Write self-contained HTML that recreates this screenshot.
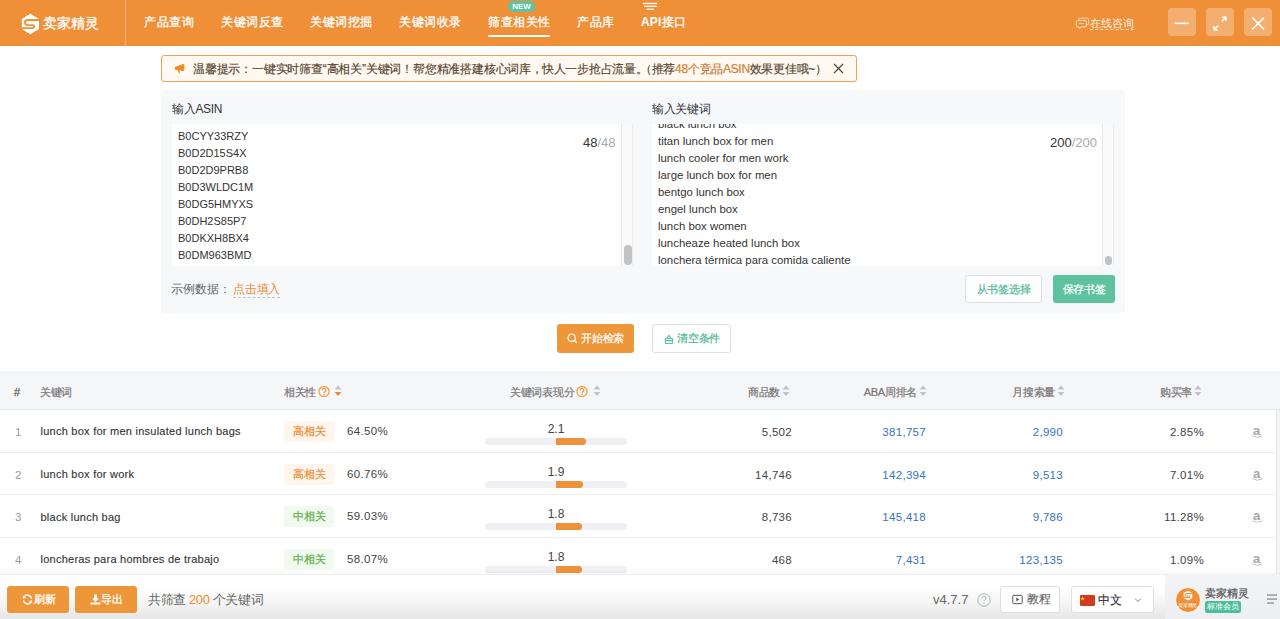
<!DOCTYPE html>
<html><head><meta charset="utf-8">
<style>
*{box-sizing:border-box;margin:0;padding:0}
html,body{width:1280px;height:619px;overflow:hidden;background:#fff;font-family:"Liberation Sans",sans-serif;color:#333}
.a{position:absolute;white-space:nowrap}
#hdr{position:absolute;left:0;top:0;width:1280px;height:46px;background:#EF9039}
.nav{position:absolute;top:15px;font-size:12px;line-height:15px;color:#fff;font-weight:400;-webkit-text-stroke:0.3px #fff;letter-spacing:0.6px;white-space:nowrap}
.winbtn{position:absolute;top:8px;width:28px;height:28px;border-radius:4px;background:rgba(255,255,255,.28)}
.winbtn svg{position:absolute;left:0;top:0}
#notice{position:absolute;left:161px;top:55px;width:696px;height:27px;border:1px solid #F2A15A;border-radius:3px;background:#FFF9F2}
#panel{position:absolute;left:161px;top:90px;width:964px;height:223px;background:#F7F8FA;border-radius:4px}
.lbl{position:absolute;font-size:12px;color:#333;line-height:14px;white-space:nowrap;letter-spacing:-0.3px}
.ta{position:absolute;top:124px;height:142px;background:#fff;overflow:hidden}
.ln{position:absolute;font-size:11px;line-height:17px;color:#333;white-space:nowrap}
.cnt{position:absolute;font-size:13px;line-height:15px;color:#333;white-space:nowrap}
.cnt span{color:#aaa}
.sb{position:absolute;top:124px;height:142px;background:#FAFAFA;border-left:1px solid #E8E8E8;border-right:1px solid #EDEDED}
.thumb{position:absolute;background:#C2C2C2;border-radius:4px}
.btn{position:absolute;border-radius:3px;white-space:nowrap}
#thead{position:absolute;left:0;top:371px;width:1280px;height:39px;background:#F5F6F8;border-bottom:1px solid #E6E8EB}
.th{position:absolute;top:385px;font-size:11px;color:#757575;white-space:nowrap;line-height:14px;letter-spacing:-0.3px;-webkit-text-stroke:0.2px #757575}
.row{position:absolute;left:0;width:1276px;border-bottom:1px solid #EBECEE}
.td{position:absolute;font-size:12px;color:#444;white-space:nowrap;line-height:14px}
.kw{font-size:11px;letter-spacing:0.25px;-webkit-text-stroke:0.12px #333;color:#333}
.num{text-align:right;font-size:11.5px;letter-spacing:0.3px}
.pct{font-size:11.5px;letter-spacing:0.35px}
.blue{color:#3572C2}
.tag{position:absolute;left:284px;width:50px;height:21px;border-radius:3px;font-size:11px;line-height:21px;text-align:center;-webkit-text-stroke:0.2px currentColor}
.hi{background:#FEF5EC;color:#EF8A2E}
.mid{background:#F0FAEE;color:#5BAF45}
.track{position:absolute;left:485px;width:142px;height:7px;border-radius:4px;background:#EEF0F4}
.fill{position:absolute;left:71px;top:0;height:7px;border-radius:0 4px 4px 0;background:#EE9138}
#footer{position:absolute;left:0;top:574px;width:1280px;height:45px;background:linear-gradient(#fff 0%,#fff 30%,#F5F5F5 62%,#E6E6E6 100%);border-top:1px solid #EFEFEF;box-shadow:0 -2px 3px rgba(0,0,0,0.03)}
</style></head><body>
<div id="hdr">
  <div class="a" style="left:125px;top:0;width:1px;height:46px;background:rgba(255,255,255,.35)"></div>
  <svg class="a" style="left:16px;top:8px" width="30" height="30" viewBox="16 8 30 30">
    <polygon points="30.3,13.8 39,18.9 39,29 30.3,34.2 21.8,29 21.8,18.9" fill="#fff"/>
    <path d="M40,20 H27.5 A2.55,2.55 0 0 0 27.5,25.1 H33 A1.5,1.5 0 0 1 33,28.1 H20" fill="none" stroke="#EF9039" stroke-width="1.8"/>
  </svg>
  <div class="nav" style="left:43px;top:16px;font-size:14px;letter-spacing:-0.1px">卖家精灵</div>
  <div class="nav" style="left:144px">产品查询</div>
  <div class="nav" style="left:221px">关键词反查</div>
  <div class="nav" style="left:310px">关键词挖掘</div>
  <div class="nav" style="left:399px">关键词收录</div>
  <div class="nav" style="left:488px">筛查相关性</div>
  <div class="a" style="left:488px;top:35px;width:62px;height:2px;background:#fff;border-radius:1px"></div>
  <div class="a" style="left:508px;top:1px;width:27px;height:10.5px;border-radius:5px;background:#5DC3A0;color:#fff;font-size:8px;line-height:12px;font-weight:700;text-align:center">NEW</div>
  <div class="nav" style="left:577px">产品库</div>
  <svg class="a" style="left:642px;top:0" width="16" height="11" viewBox="0 0 16 11"><rect x="1" y="2.8" width="14.2" height="1.3" fill="#fff"/><rect x="2" y="5.7" width="13" height="1.3" fill="#fff"/><rect x="4.6" y="8.6" width="7.2" height="1.3" fill="#fff"/></svg>
  <div class="nav" style="left:641px"><span style="font-weight:700;-webkit-text-stroke:0;letter-spacing:0.2px">API</span>接口</div>
  <svg class="a" style="left:1072px;top:12px" width="20" height="20" viewBox="0 0 20 20"><path d="M6.8,8.3 V7.2 Q6.8,6.2 7.8,6.2 H15.6 Q16.6,6.2 16.6,7.2 V11.6 Q16.6,12.6 15.6,12.6 H14.6" fill="none" stroke="rgba(255,255,255,.7)" stroke-width="0.9"/><path d="M5.4,8.6 H13.3 Q14.4,8.6 14.4,9.7 V13.8 Q14.4,14.9 13.3,14.9 H9.2 L7.6,16.6 L7.1,14.9 H5.4 Q4.3,14.9 4.3,13.8 V9.7 Q4.3,8.6 5.4,8.6 Z" fill="none" stroke="rgba(255,255,255,.8)" stroke-width="0.9"/><path d="M6.6,11.6 H12.2" stroke="rgba(255,255,255,.6)" stroke-width="0.8"/></svg>
  <div class="nav" style="left:1090px;top:16px;font-size:11px;letter-spacing:0;-webkit-text-stroke:0;color:rgba(255,255,255,.88);border-bottom:1px dashed rgba(255,255,255,.8);line-height:12px;padding-bottom:0;top:17px">在线咨询</div>
  <div class="winbtn" style="left:1168px"><svg width="28" height="28"><rect x="6.6" y="14.6" width="14" height="1.5" fill="#fff"/></svg></div>
  <div class="winbtn" style="left:1206px"><svg width="28" height="28"><path d="M16.4,9.2 H20 V12.8 M20,9.2 L15.8,13.4 M8,18.2 V21.8 H11.6 M8,21.8 L12.2,17.6" fill="none" stroke="#fff" stroke-width="1.5"/></svg></div>
  <div class="winbtn" style="left:1244px"><svg width="28" height="28"><path d="M8.3,9.6 L20,21.3 M20,9.6 L8.3,21.3" stroke="#fff" stroke-width="1.5"/></svg></div>
</div>
<div id="notice"></div>
<svg class="a" style="left:174px;top:63px" width="12" height="11" viewBox="0 0 12 11"><path d="M0.8,3.9 L9,1.1 Q10.5,0.7 10.5,4.5 Q10.5,8.3 9,7.9 L0.8,6.7 Z" fill="#EE8B35"/><path d="M4.3,7.3 L5.5,9.6" stroke="#EE8B35" stroke-width="1.4" stroke-linecap="round"/></svg>
<div class="a" style="left:193px;top:61.5px;font-size:12px;line-height:14px;color:#55432E;letter-spacing:-0.2px;-webkit-text-stroke:0.15px #55432E">温馨提示：一键实时筛查“高相关”关键词！帮您精准搭建核心词库，</div>
<div class="a" style="left:542px;top:61.5px;font-size:12px;line-height:14px;color:#55432E;letter-spacing:-0.3px;-webkit-text-stroke:0.15px #55432E">快人一步抢占流量。</div>
<div class="a" style="left:640px;top:61.5px;font-size:12px;line-height:14px;color:#55432E;letter-spacing:-0.3px;-webkit-text-stroke:0.15px #55432E">（推荐<span style="color:#EF8A2E">48个竞品ASIN</span>效果更佳哦~）</div>
<svg class="a" style="left:833px;top:63px" width="11" height="11" viewBox="0 0 11 11"><path d="M1,1 L10,10 M10,1 L1,10" stroke="#5a4a3a" stroke-width="1.3"/></svg>
<div id="panel"></div>
<div class="lbl" style="left:172px;top:102px">输入ASIN</div>
<div class="lbl" style="left:652px;top:102px">输入关键词</div>
<div class="ta" style="left:172px;width:461px">
  <div class="ln" style="left:6px;top:4px">B0CYY33RZY</div>
  <div class="ln" style="left:6px;top:21px">B0D2D15S4X</div>
  <div class="ln" style="left:6px;top:38px">B0D2D9PRB8</div>
  <div class="ln" style="left:6px;top:55px">B0D3WLDC1M</div>
  <div class="ln" style="left:6px;top:72px">B0DG5HMYXS</div>
  <div class="ln" style="left:6px;top:89px">B0DH2S85P7</div>
  <div class="ln" style="left:6px;top:106px">B0DKXH8BX4</div>
  <div class="ln" style="left:6px;top:123px">B0DM963BMD</div>
</div>
<div class="sb" style="left:621px;width:12px"></div>
<div class="thumb" style="left:624px;top:245px;width:8px;height:20px"></div>
<div class="cnt" style="left:583px;top:135px">48<span>/48</span></div>
<div class="ta" style="left:652px;width:462px">
  <div class="ln" style="left:6px;top:-8px;font-size:11.4px">black lunch box</div>
  <div class="ln" style="left:6px;top:9px;font-size:11.4px">titan lunch box for men</div>
  <div class="ln" style="left:6px;top:26px;font-size:11.4px">lunch cooler for men work</div>
  <div class="ln" style="left:6px;top:43px;font-size:11.4px">large lunch box for men</div>
  <div class="ln" style="left:6px;top:60px;font-size:11.4px">bentgo lunch box</div>
  <div class="ln" style="left:6px;top:77px;font-size:11.4px">engel lunch box</div>
  <div class="ln" style="left:6px;top:94px;font-size:11.4px">lunch box women</div>
  <div class="ln" style="left:6px;top:111px;font-size:11.4px">luncheaze heated lunch box</div>
  <div class="ln" style="left:6px;top:128px;font-size:11.4px">lonchera térmica para comida caliente</div>
</div>
<div class="sb" style="left:1102px;width:12px"></div>
<div class="thumb" style="left:1105px;top:256px;width:7px;height:9px"></div>
<div class="cnt" style="left:1050px;top:135px">200<span>/200</span></div>
<div class="a" style="left:171px;top:282px;font-size:12px;line-height:14px;color:#666">示例数据：</div>
<div class="a" style="left:233px;top:282px;font-size:12px;line-height:14px;color:#EF8A2E;border-bottom:1px dashed #BFC3C8;padding-bottom:1px;letter-spacing:-0.2px">点击填入</div>
<div class="btn" style="left:965px;top:275px;width:77px;height:28px;background:#fff;border:1px solid #DCDFE6;color:#4DB993;font-size:11px;line-height:26px;text-align:center;letter-spacing:-0.3px;-webkit-text-stroke:0.2px #4DB993">从书签选择</div>
<div class="btn" style="left:1053px;top:275px;width:62px;height:28px;background:#5EC29F;color:#fff;font-size:11px;line-height:28px;text-align:center;letter-spacing:-0.3px;-webkit-text-stroke:0.2px #fff">保存书签</div>
<div class="btn" style="left:557px;top:324px;width:77px;height:29px;background:#EE963A;color:#fff;font-size:11px;line-height:29px">
  <svg class="a" style="left:10px;top:9px" width="11" height="11" viewBox="0 0 11 11"><circle cx="4.7" cy="4.7" r="3.7" fill="none" stroke="#fff" stroke-width="1.2"/><path d="M7.3,7.3 L9.8,9.8" stroke="#fff" stroke-width="1.3"/></svg>
  <span class="a" style="left:24px;top:0;letter-spacing:-0.2px;-webkit-text-stroke:0.2px #fff">开始检索</span></div>
<div class="btn" style="left:652px;top:324px;width:79px;height:29px;background:#fff;border:1px solid #DCDFE6;color:#4DB993;font-size:11px;line-height:27px">
  <svg class="a" style="left:11px;top:8.5px" width="10" height="11" viewBox="0 0 10 11"><path d="M1.4,4.5 H8.4 V9.5 H1.4 Z M1.4,6.6 H8.4 M2.8,4.5 L4.9,1.2 L7,4.5" fill="none" stroke="#5CC3A2" stroke-width="1.1" stroke-linejoin="round"/></svg>
  <span class="a" style="left:24px;top:0;letter-spacing:-0.2px;-webkit-text-stroke:0.2px #4DB993">清空条件</span></div>
<div id="thead"></div>
<div class="th" style="left:14px;-webkit-text-stroke:0.3px #666">#</div>
<div class="th" style="left:40px">关键词</div>
<div class="th" style="left:284px">相关性</div>
<svg class="a" style="left:318px;top:386px" width="12" height="12" viewBox="0 0 12 12"><circle cx="6" cy="5.6" r="5.1" fill="none" stroke="#EF9A3C" stroke-width="1.15"/><path d="M4.2,4.3 A1.8,1.8 0 1 1 6.7,5.9 Q6,6.3 6,7.2" fill="none" stroke="#EF9A3C" stroke-width="1.25"/><circle cx="6" cy="8.7" r="0.7" fill="#EF9A3C"/></svg>
<svg class="a" style="left:334px;top:385px" width="8" height="12" viewBox="0 0 8 12"><path d="M4,0.5 L7.5,4.5 H0.5 Z" fill="#C0C4CC"/><path d="M0.5,7 H7.5 L4,11 Z" fill="#EF8A2E"/></svg>
<div class="th" style="left:510px">关键词表现分</div>
<svg class="a" style="left:576px;top:386px" width="12" height="12" viewBox="0 0 12 12"><circle cx="6" cy="5.6" r="5.1" fill="none" stroke="#EF9A3C" stroke-width="1.15"/><path d="M4.2,4.3 A1.8,1.8 0 1 1 6.7,5.9 Q6,6.3 6,7.2" fill="none" stroke="#EF9A3C" stroke-width="1.25"/><circle cx="6" cy="8.7" r="0.7" fill="#EF9A3C"/></svg>
<svg class="a" style="left:593px;top:385px" width="8" height="12" viewBox="0 0 8 12"><path d="M4,0.5 L7.5,4.5 H0.5 Z" fill="#C0C4CC"/><path d="M0.5,7 H7.5 L4,11 Z" fill="#C0C4CC"/></svg>
<div class="th" style="right:500px">商品数</div>
<svg class="a" style="left:782px;top:385px" width="8" height="12" viewBox="0 0 8 12"><path d="M4,0.5 L7.5,4.5 H0.5 Z" fill="#C0C4CC"/><path d="M0.5,7 H7.5 L4,11 Z" fill="#C0C4CC"/></svg>
<div class="th" style="right:363px">ABA周排名</div>
<svg class="a" style="left:919px;top:385px" width="8" height="12" viewBox="0 0 8 12"><path d="M4,0.5 L7.5,4.5 H0.5 Z" fill="#C0C4CC"/><path d="M0.5,7 H7.5 L4,11 Z" fill="#C0C4CC"/></svg>
<div class="th" style="right:225px">月搜索量</div>
<svg class="a" style="left:1057px;top:385px" width="8" height="12" viewBox="0 0 8 12"><path d="M4,0.5 L7.5,4.5 H0.5 Z" fill="#C0C4CC"/><path d="M0.5,7 H7.5 L4,11 Z" fill="#C0C4CC"/></svg>
<div class="th" style="right:88px">购买率</div>
<svg class="a" style="left:1194px;top:385px" width="8" height="12" viewBox="0 0 8 12"><path d="M4,0.5 L7.5,4.5 H0.5 Z" fill="#C0C4CC"/><path d="M0.5,7 H7.5 L4,11 Z" fill="#C0C4CC"/></svg>
<div class="row" style="top:410px;height:42.5px"></div>
<div class="td" style="left:15px;top:425px;color:#999;font-size:11.5px">1</div>
<div class="td kw" style="left:40.5px;top:423.5px">lunch box for men insulated lunch bags</div>
<div class="tag hi" style="top:421px">高相关</div>
<div class="td pct" style="left:347px;top:424px">64.50%</div>
<div class="td" style="left:506px;width:100px;text-align:center;top:422px">2.1</div>
<div class="track" style="top:438px"><div class="fill" style="width:29.8px"></div></div>
<div class="td num" style="right:488px;top:425px">5,502</div>
<div class="td num blue" style="right:354px;top:425px">381,757</div>
<div class="td num blue" style="right:217px;top:425px">2,990</div>
<div class="td num" style="right:76px;top:425px">2.85%</div>
<div class="td" style="left:1253px;top:424px;color:#A3A7AE;font-size:13px;font-weight:700;line-height:14px">a</div><svg class="a" style="left:1252px;top:435px" width="11" height="4" viewBox="0 0 11 4"><path d="M0.5,0.8 Q5.5,3.6 10.5,0.8" fill="none" stroke="#B5B8BE" stroke-width="0.9"/></svg>
<div class="row" style="top:452.5px;height:42.5px"></div>
<div class="td" style="left:15px;top:467.5px;color:#999;font-size:11.5px">2</div>
<div class="td kw" style="left:40.5px;top:467px">lunch box for work</div>
<div class="tag hi" style="top:463.5px">高相关</div>
<div class="td pct" style="left:347px;top:466.5px">60.76%</div>
<div class="td" style="left:506px;width:100px;text-align:center;top:464.5px">1.9</div>
<div class="track" style="top:480.5px"><div class="fill" style="width:27.0px"></div></div>
<div class="td num" style="right:488px;top:467.5px">14,746</div>
<div class="td num blue" style="right:354px;top:467.5px">142,394</div>
<div class="td num blue" style="right:217px;top:467.5px">9,513</div>
<div class="td num" style="right:76px;top:467.5px">7.01%</div>
<div class="td" style="left:1253px;top:466.5px;color:#A3A7AE;font-size:13px;font-weight:700;line-height:14px">a</div><svg class="a" style="left:1252px;top:477.5px" width="11" height="4" viewBox="0 0 11 4"><path d="M0.5,0.8 Q5.5,3.6 10.5,0.8" fill="none" stroke="#B5B8BE" stroke-width="0.9"/></svg>
<div class="row" style="top:495px;height:42.5px"></div>
<div class="td" style="left:15px;top:510px;color:#999;font-size:11.5px">3</div>
<div class="td kw" style="left:40.5px;top:509.5px">black lunch bag</div>
<div class="tag mid" style="top:506px">中相关</div>
<div class="td pct" style="left:347px;top:509px">59.03%</div>
<div class="td" style="left:506px;width:100px;text-align:center;top:507px">1.8</div>
<div class="track" style="top:523px"><div class="fill" style="width:25.6px"></div></div>
<div class="td num" style="right:488px;top:510px">8,736</div>
<div class="td num blue" style="right:354px;top:510px">145,418</div>
<div class="td num blue" style="right:217px;top:510px">9,786</div>
<div class="td num" style="right:76px;top:510px">11.28%</div>
<div class="td" style="left:1253px;top:509px;color:#A3A7AE;font-size:13px;font-weight:700;line-height:14px">a</div><svg class="a" style="left:1252px;top:520px" width="11" height="4" viewBox="0 0 11 4"><path d="M0.5,0.8 Q5.5,3.6 10.5,0.8" fill="none" stroke="#B5B8BE" stroke-width="0.9"/></svg>
<div class="row" style="top:537.5px;height:42.5px"></div>
<div class="td" style="left:15px;top:552.5px;color:#999;font-size:11.5px">4</div>
<div class="td kw" style="left:40.5px;top:552px">loncheras para hombres de trabajo</div>
<div class="tag mid" style="top:548.5px">中相关</div>
<div class="td pct" style="left:347px;top:551.5px">58.07%</div>
<div class="td" style="left:506px;width:100px;text-align:center;top:549.5px">1.8</div>
<div class="track" style="top:565.5px"><div class="fill" style="width:25.6px"></div></div>
<div class="td num" style="right:488px;top:552.5px">468</div>
<div class="td num blue" style="right:354px;top:552.5px">7,431</div>
<div class="td num blue" style="right:217px;top:552.5px">123,135</div>
<div class="td num" style="right:76px;top:552.5px">1.09%</div>
<div class="td" style="left:1253px;top:551.5px;color:#A3A7AE;font-size:13px;font-weight:700;line-height:14px">a</div><svg class="a" style="left:1252px;top:562.5px" width="11" height="4" viewBox="0 0 11 4"><path d="M0.5,0.8 Q5.5,3.6 10.5,0.8" fill="none" stroke="#B5B8BE" stroke-width="0.9"/></svg>
<div class="a" style="left:1276px;top:410px;width:1px;height:165px;background:#E8E9EB"></div><div class="a" style="left:1277px;top:410px;width:3px;height:165px;background:#F3F3F3"></div>
<div id="footer">
  <div class="btn" style="left:7px;top:11px;width:62px;height:27px;background:#EE963A;color:#fff;font-size:12px;line-height:27px">
    <svg class="a" style="left:15px;top:8px" width="11" height="11" viewBox="0 0 11 11"><path d="M9.6,4.6 A4.2,4.2 0 0 0 2.2,2.6 M1.4,6.4 A4.2,4.2 0 0 0 8.8,8.4" fill="none" stroke="#fff" stroke-width="1.4"/><path d="M0.6,1.6 L1.2,4.9 L4.3,3.6 Z M10.4,9.4 L9.8,6.1 L6.7,7.4 Z" fill="#fff"/></svg>
    <span class="a" style="left:27px;top:0;font-size:11px;-webkit-text-stroke:0.3px #fff">刷新</span></div>
  <div class="btn" style="left:75px;top:11px;width:62px;height:27px;background:#EE963A;color:#fff;font-size:12px;line-height:27px">
    <svg class="a" style="left:15px;top:8px" width="11" height="11" viewBox="0 0 11 11"><path d="M4,0.5 H7 V4.5 H9 L5.5,8 L2,4.5 H4 Z" fill="#fff"/><rect x="0.5" y="8.5" width="10" height="2" fill="#fff"/></svg>
    <span class="a" style="left:26px;top:0;font-size:11px;-webkit-text-stroke:0.3px #fff">导出</span></div>
  <div class="a" style="left:148px;top:17px;font-size:13px;line-height:15px;color:#666;letter-spacing:-0.4px">共筛查 <span style="color:#EF8A2E">200</span> 个关键词</div>
  <div class="a" style="left:933px;top:17px;font-size:13px;line-height:15px;color:#666">v4.7.7</div>
  <svg class="a" style="left:977px;top:18px" width="14" height="14" viewBox="0 0 14 14"><circle cx="7" cy="7" r="6.2" fill="none" stroke="#AAB0BA" stroke-width="1"/><path d="M5,5.4 A2,2 0 1 1 7.6,7.2 Q7,7.6 7,8.5" fill="none" stroke="#AAB0BA" stroke-width="1"/><circle cx="7" cy="10.4" r="0.7" fill="#AAB0BA"/></svg>
  <div class="btn" style="left:1000px;top:11px;width:60px;height:27px;background:#fff;border:1px solid #DCDFE6;color:#555;font-size:12px;line-height:25px">
    <svg class="a" style="left:11px;top:7px" width="11" height="11" viewBox="0 0 11 11"><rect x="0.8" y="1.3" width="9.4" height="8.4" rx="1" fill="none" stroke="#555" stroke-width="1"/><path d="M4.3,3.5 L7.3,5.5 L4.3,7.5 Z" fill="#555"/></svg>
    <span class="a" style="left:26px;top:0;letter-spacing:-0.3px;color:#666;-webkit-text-stroke:0.15px #666">教程</span></div>
  <div class="btn" style="left:1071px;top:11px;width:83px;height:27px;background:#fff;border:1px solid #DCDFE6;color:#333;font-size:12px;line-height:25px">
    <svg class="a" style="left:8px;top:8px" width="15" height="11" viewBox="0 0 15 11"><rect width="15" height="11" rx="1" fill="#D33A22"/><polygon points="2.5,1.2 3.1,2.9 4.8,2.9 3.4,3.9 4,5.6 2.5,4.6 1,5.6 1.6,3.9 0.2,2.9 1.9,2.9" fill="#FFDE00"/></svg>
    <span class="a" style="left:26px;top:1px;letter-spacing:-0.4px;-webkit-text-stroke:0.15px #333">中文</span>
    <svg class="a" style="left:62px;top:10px" width="8" height="6" viewBox="0 0 8 6"><path d="M1,1.5 L4,4.5 L7,1.5" fill="none" stroke="#888" stroke-width="1"/></svg></div>
  <div class="a" style="left:1165px;top:0;width:115px;height:45px;background:linear-gradient(#F3F4F6,#EDEEF0)"></div>
  <div class="a" style="left:1175px;top:11.5px;width:26px;height:26px;border-radius:50%;background:#EF9039;border:1px solid #fff"></div>
  <svg class="a" style="left:1183px;top:15px" width="10" height="11" viewBox="21 13 19 22"><polygon points="30.3,13.8 39,18.9 39,29 30.3,34.2 21.8,29 21.8,18.9" fill="#fff"/><path d="M40,20 H27.5 A2.55,2.55 0 0 0 27.5,25.1 H33 A1.5,1.5 0 0 1 33,28.1 H20" fill="none" stroke="#EF9039" stroke-width="2.2"/></svg>
  <div class="a" style="left:1178px;top:26.5px;font-size:5px;line-height:6px;color:#fff;transform:scale(0.95);transform-origin:0 0">卖家精灵</div>
  <div class="a" style="left:1205px;top:12px;font-size:11px;line-height:13px;color:#555;-webkit-text-stroke:0.25px #555">卖家精灵</div>
  <div class="a" style="left:1205px;top:26px;width:36px;height:12px;border-radius:2px;background:#4DBE9A;color:#fff;font-size:8px;line-height:12px;text-align:center">标准会员</div>
  <svg class="a" style="left:1266px;top:19px" width="12" height="11" viewBox="0 0 12 11"><rect x="1" y="0.5" width="10" height="1.1" fill="#777"/><rect x="1" y="4.5" width="10" height="1.1" fill="#777"/><rect x="1" y="8.5" width="7" height="1.1" fill="#777"/></svg>
</div>
</body></html>
